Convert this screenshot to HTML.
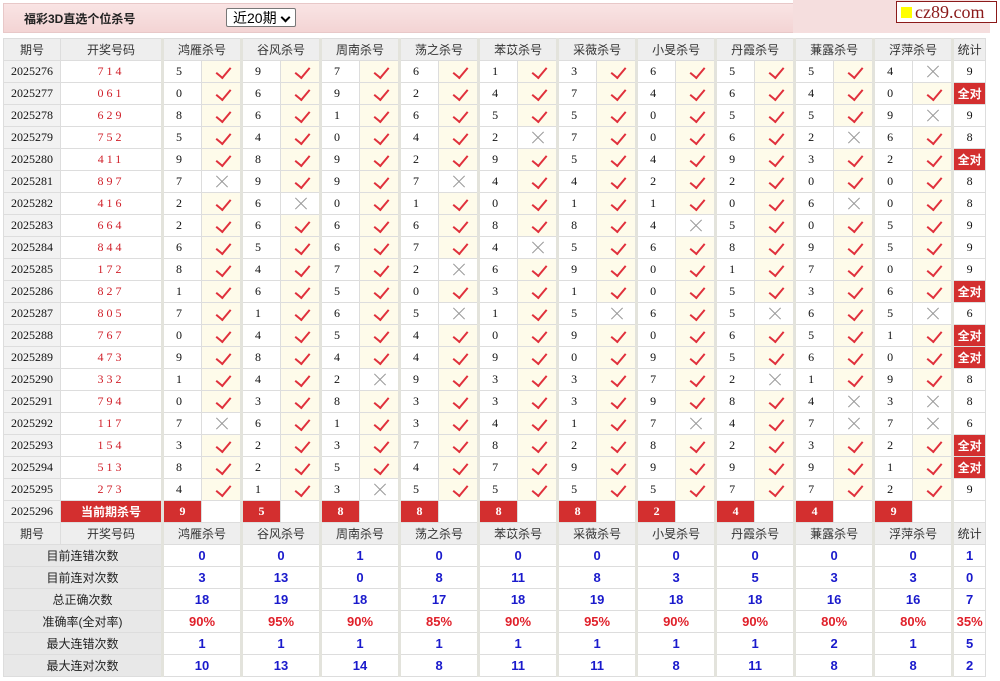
<!DOCTYPE html>
<html><head><meta charset="utf-8"><style>
body{margin:0;width:1000px;height:681px;background:#fff;font-family:"Liberation Sans","Noto Sans CJK SC",sans-serif;position:relative;overflow:hidden}
.bar{position:absolute;left:3px;top:3px;width:790px;height:28px;background:linear-gradient(#f9e4e4,#f3d4d4);border:1px solid #e8c8c8}
.bar b{position:absolute;left:20px;top:6px;font-size:12px;color:#222}
.sel{position:absolute;left:222px;top:4px;width:70px;height:19px;border:1px solid #777;border-radius:2px;background:#fff;font-size:14px;line-height:19px;padding-left:6px;box-sizing:border-box}
.sel:after{content:"";position:absolute;right:6px;top:5px;width:5px;height:5px;border-right:2px solid #000;border-bottom:2px solid #000;transform:rotate(45deg)}
.pk{position:absolute;left:793px;top:0;width:197px;height:33px;background:#f5dede}
.logo{position:absolute;left:896px;top:1px;width:99px;height:20px;border:1px solid #8b1a1a;background:#fff;font-family:"Liberation Serif",serif;font-size:18px;color:#8b1a1a;line-height:20px;white-space:nowrap;overflow:hidden}
.logo i{display:inline-block;width:11px;height:11px;background:#ff0;margin:0 3px 0 4px}
table{position:absolute;left:3px;top:38px;border-collapse:collapse;table-layout:fixed;width:982px}
td{height:21px;border:1px solid #ddd;padding:0;text-align:center;font-size:12px;font-family:"Liberation Serif","Noto Sans CJK SC",serif;color:#111;position:relative}
.h td{background:#eee;font-family:"Liberation Sans","Noto Sans CJK SC",sans-serif;color:#333}
td.p{background:#f2f2f2}
td.r{color:#d0202a;letter-spacing:3px}
td.n{border-left:3px solid #e3e3dc;text-align:left;padding-left:12px}
.h td.g{border-left:3px solid #e3e3dc}
td.c{background:#fefbea}
td.c:after{content:"";position:absolute;left:17px;top:3px;width:7px;height:12px;border-right:2px solid #e0303c;border-bottom:2px solid #e0303c;transform:rotate(40deg)}
td.x:before,td.x:after{content:"";position:absolute;left:12px;top:10px;width:16px;height:1px;background:#999;transform:rotate(45deg)}
td.x:after{transform:rotate(-45deg)}
td.q{font-family:"Liberation Sans","Noto Sans CJK SC",sans-serif;background:#d32f2f;color:#fff;font-weight:bold;font-size:12px;border-color:#fff #ddd #ddd #ddd}
td.k{background:#d32f2f;color:#fff;font-weight:bold;text-align:center;padding:0}
td.s{border-left:3px solid #e3e3dc}
.st td{font-family:"Liberation Sans",sans-serif;font-weight:bold;color:#1a1acc;font-size:13px;border-left:3px solid #e3e3dc}
.st.red td{color:#e0202a}
.st td.l{background:#e8e8e8;color:#222;font-weight:normal;font-size:12px;font-family:"Liberation Sans","Noto Sans CJK SC",sans-serif;border-left:1px solid #ddd}
</style></head><body>
<div class="bar"><b>福彩3D直选个位杀号</b><div class="sel">近20期</div></div>
<div class="pk"></div>
<div class="logo"><i></i>cz89.com</div>
<table>
<colgroup><col style="width:57px"><col style="width:102px">
<col style="width:39px"><col style="width:40px"><col style="width:39px"><col style="width:40px"><col style="width:39px"><col style="width:40px"><col style="width:39px"><col style="width:40px"><col style="width:39px"><col style="width:40px"><col style="width:39px"><col style="width:40px"><col style="width:39px"><col style="width:40px"><col style="width:39px"><col style="width:40px"><col style="width:39px"><col style="width:40px"><col style="width:39px"><col style="width:40px"><col style="width:33px"></colgroup>
<tr class="h"><td>期号</td><td>开奖号码</td><td colspan="2" class="g">鸿雁杀号</td><td colspan="2" class="g">谷风杀号</td><td colspan="2" class="g">周南杀号</td><td colspan="2" class="g">荡之杀号</td><td colspan="2" class="g">苯苡杀号</td><td colspan="2" class="g">采薇杀号</td><td colspan="2" class="g">小旻杀号</td><td colspan="2" class="g">丹霞杀号</td><td colspan="2" class="g">蒹露杀号</td><td colspan="2" class="g">浮萍杀号</td><td class="g">统计</td></tr>
<tr><td class="p">2025276</td><td class="r">714</td><td class="n">5</td><td class="c"></td><td class="n">9</td><td class="c"></td><td class="n">7</td><td class="c"></td><td class="n">6</td><td class="c"></td><td class="n">1</td><td class="c"></td><td class="n">3</td><td class="c"></td><td class="n">6</td><td class="c"></td><td class="n">5</td><td class="c"></td><td class="n">5</td><td class="c"></td><td class="n">4</td><td class="x"></td><td class="s">9</td></tr>
<tr><td class="p">2025277</td><td class="r">061</td><td class="n">0</td><td class="c"></td><td class="n">6</td><td class="c"></td><td class="n">9</td><td class="c"></td><td class="n">2</td><td class="c"></td><td class="n">4</td><td class="c"></td><td class="n">7</td><td class="c"></td><td class="n">4</td><td class="c"></td><td class="n">6</td><td class="c"></td><td class="n">4</td><td class="c"></td><td class="n">0</td><td class="c"></td><td class="s q">全对</td></tr>
<tr><td class="p">2025278</td><td class="r">629</td><td class="n">8</td><td class="c"></td><td class="n">6</td><td class="c"></td><td class="n">1</td><td class="c"></td><td class="n">6</td><td class="c"></td><td class="n">5</td><td class="c"></td><td class="n">5</td><td class="c"></td><td class="n">0</td><td class="c"></td><td class="n">5</td><td class="c"></td><td class="n">5</td><td class="c"></td><td class="n">9</td><td class="x"></td><td class="s">9</td></tr>
<tr><td class="p">2025279</td><td class="r">752</td><td class="n">5</td><td class="c"></td><td class="n">4</td><td class="c"></td><td class="n">0</td><td class="c"></td><td class="n">4</td><td class="c"></td><td class="n">2</td><td class="x"></td><td class="n">7</td><td class="c"></td><td class="n">0</td><td class="c"></td><td class="n">6</td><td class="c"></td><td class="n">2</td><td class="x"></td><td class="n">6</td><td class="c"></td><td class="s">8</td></tr>
<tr><td class="p">2025280</td><td class="r">411</td><td class="n">9</td><td class="c"></td><td class="n">8</td><td class="c"></td><td class="n">9</td><td class="c"></td><td class="n">2</td><td class="c"></td><td class="n">9</td><td class="c"></td><td class="n">5</td><td class="c"></td><td class="n">4</td><td class="c"></td><td class="n">9</td><td class="c"></td><td class="n">3</td><td class="c"></td><td class="n">2</td><td class="c"></td><td class="s q">全对</td></tr>
<tr><td class="p">2025281</td><td class="r">897</td><td class="n">7</td><td class="x"></td><td class="n">9</td><td class="c"></td><td class="n">9</td><td class="c"></td><td class="n">7</td><td class="x"></td><td class="n">4</td><td class="c"></td><td class="n">4</td><td class="c"></td><td class="n">2</td><td class="c"></td><td class="n">2</td><td class="c"></td><td class="n">0</td><td class="c"></td><td class="n">0</td><td class="c"></td><td class="s">8</td></tr>
<tr><td class="p">2025282</td><td class="r">416</td><td class="n">2</td><td class="c"></td><td class="n">6</td><td class="x"></td><td class="n">0</td><td class="c"></td><td class="n">1</td><td class="c"></td><td class="n">0</td><td class="c"></td><td class="n">1</td><td class="c"></td><td class="n">1</td><td class="c"></td><td class="n">0</td><td class="c"></td><td class="n">6</td><td class="x"></td><td class="n">0</td><td class="c"></td><td class="s">8</td></tr>
<tr><td class="p">2025283</td><td class="r">664</td><td class="n">2</td><td class="c"></td><td class="n">6</td><td class="c"></td><td class="n">6</td><td class="c"></td><td class="n">6</td><td class="c"></td><td class="n">8</td><td class="c"></td><td class="n">8</td><td class="c"></td><td class="n">4</td><td class="x"></td><td class="n">5</td><td class="c"></td><td class="n">0</td><td class="c"></td><td class="n">5</td><td class="c"></td><td class="s">9</td></tr>
<tr><td class="p">2025284</td><td class="r">844</td><td class="n">6</td><td class="c"></td><td class="n">5</td><td class="c"></td><td class="n">6</td><td class="c"></td><td class="n">7</td><td class="c"></td><td class="n">4</td><td class="x"></td><td class="n">5</td><td class="c"></td><td class="n">6</td><td class="c"></td><td class="n">8</td><td class="c"></td><td class="n">9</td><td class="c"></td><td class="n">5</td><td class="c"></td><td class="s">9</td></tr>
<tr><td class="p">2025285</td><td class="r">172</td><td class="n">8</td><td class="c"></td><td class="n">4</td><td class="c"></td><td class="n">7</td><td class="c"></td><td class="n">2</td><td class="x"></td><td class="n">6</td><td class="c"></td><td class="n">9</td><td class="c"></td><td class="n">0</td><td class="c"></td><td class="n">1</td><td class="c"></td><td class="n">7</td><td class="c"></td><td class="n">0</td><td class="c"></td><td class="s">9</td></tr>
<tr><td class="p">2025286</td><td class="r">827</td><td class="n">1</td><td class="c"></td><td class="n">6</td><td class="c"></td><td class="n">5</td><td class="c"></td><td class="n">0</td><td class="c"></td><td class="n">3</td><td class="c"></td><td class="n">1</td><td class="c"></td><td class="n">0</td><td class="c"></td><td class="n">5</td><td class="c"></td><td class="n">3</td><td class="c"></td><td class="n">6</td><td class="c"></td><td class="s q">全对</td></tr>
<tr><td class="p">2025287</td><td class="r">805</td><td class="n">7</td><td class="c"></td><td class="n">1</td><td class="c"></td><td class="n">6</td><td class="c"></td><td class="n">5</td><td class="x"></td><td class="n">1</td><td class="c"></td><td class="n">5</td><td class="x"></td><td class="n">6</td><td class="c"></td><td class="n">5</td><td class="x"></td><td class="n">6</td><td class="c"></td><td class="n">5</td><td class="x"></td><td class="s">6</td></tr>
<tr><td class="p">2025288</td><td class="r">767</td><td class="n">0</td><td class="c"></td><td class="n">4</td><td class="c"></td><td class="n">5</td><td class="c"></td><td class="n">4</td><td class="c"></td><td class="n">0</td><td class="c"></td><td class="n">9</td><td class="c"></td><td class="n">0</td><td class="c"></td><td class="n">6</td><td class="c"></td><td class="n">5</td><td class="c"></td><td class="n">1</td><td class="c"></td><td class="s q">全对</td></tr>
<tr><td class="p">2025289</td><td class="r">473</td><td class="n">9</td><td class="c"></td><td class="n">8</td><td class="c"></td><td class="n">4</td><td class="c"></td><td class="n">4</td><td class="c"></td><td class="n">9</td><td class="c"></td><td class="n">0</td><td class="c"></td><td class="n">9</td><td class="c"></td><td class="n">5</td><td class="c"></td><td class="n">6</td><td class="c"></td><td class="n">0</td><td class="c"></td><td class="s q">全对</td></tr>
<tr><td class="p">2025290</td><td class="r">332</td><td class="n">1</td><td class="c"></td><td class="n">4</td><td class="c"></td><td class="n">2</td><td class="x"></td><td class="n">9</td><td class="c"></td><td class="n">3</td><td class="c"></td><td class="n">3</td><td class="c"></td><td class="n">7</td><td class="c"></td><td class="n">2</td><td class="x"></td><td class="n">1</td><td class="c"></td><td class="n">9</td><td class="c"></td><td class="s">8</td></tr>
<tr><td class="p">2025291</td><td class="r">794</td><td class="n">0</td><td class="c"></td><td class="n">3</td><td class="c"></td><td class="n">8</td><td class="c"></td><td class="n">3</td><td class="c"></td><td class="n">3</td><td class="c"></td><td class="n">3</td><td class="c"></td><td class="n">9</td><td class="c"></td><td class="n">8</td><td class="c"></td><td class="n">4</td><td class="x"></td><td class="n">3</td><td class="x"></td><td class="s">8</td></tr>
<tr><td class="p">2025292</td><td class="r">117</td><td class="n">7</td><td class="x"></td><td class="n">6</td><td class="c"></td><td class="n">1</td><td class="c"></td><td class="n">3</td><td class="c"></td><td class="n">4</td><td class="c"></td><td class="n">1</td><td class="c"></td><td class="n">7</td><td class="x"></td><td class="n">4</td><td class="c"></td><td class="n">7</td><td class="x"></td><td class="n">7</td><td class="x"></td><td class="s">6</td></tr>
<tr><td class="p">2025293</td><td class="r">154</td><td class="n">3</td><td class="c"></td><td class="n">2</td><td class="c"></td><td class="n">3</td><td class="c"></td><td class="n">7</td><td class="c"></td><td class="n">8</td><td class="c"></td><td class="n">2</td><td class="c"></td><td class="n">8</td><td class="c"></td><td class="n">2</td><td class="c"></td><td class="n">3</td><td class="c"></td><td class="n">2</td><td class="c"></td><td class="s q">全对</td></tr>
<tr><td class="p">2025294</td><td class="r">513</td><td class="n">8</td><td class="c"></td><td class="n">2</td><td class="c"></td><td class="n">5</td><td class="c"></td><td class="n">4</td><td class="c"></td><td class="n">7</td><td class="c"></td><td class="n">9</td><td class="c"></td><td class="n">9</td><td class="c"></td><td class="n">9</td><td class="c"></td><td class="n">9</td><td class="c"></td><td class="n">1</td><td class="c"></td><td class="s q">全对</td></tr>
<tr><td class="p">2025295</td><td class="r">273</td><td class="n">4</td><td class="c"></td><td class="n">1</td><td class="c"></td><td class="n">3</td><td class="x"></td><td class="n">5</td><td class="c"></td><td class="n">5</td><td class="c"></td><td class="n">5</td><td class="c"></td><td class="n">5</td><td class="c"></td><td class="n">7</td><td class="c"></td><td class="n">7</td><td class="c"></td><td class="n">2</td><td class="c"></td><td class="s">9</td></tr>
<tr><td class="p">2025296</td><td class="q">当前期杀号</td><td class="n k">9</td><td></td><td class="n k">5</td><td></td><td class="n k">8</td><td></td><td class="n k">8</td><td></td><td class="n k">8</td><td></td><td class="n k">8</td><td></td><td class="n k">2</td><td></td><td class="n k">4</td><td></td><td class="n k">4</td><td></td><td class="n k">9</td><td></td><td class="s"></td></tr>
<tr class="h"><td>期号</td><td>开奖号码</td><td colspan="2" class="g">鸿雁杀号</td><td colspan="2" class="g">谷风杀号</td><td colspan="2" class="g">周南杀号</td><td colspan="2" class="g">荡之杀号</td><td colspan="2" class="g">苯苡杀号</td><td colspan="2" class="g">采薇杀号</td><td colspan="2" class="g">小旻杀号</td><td colspan="2" class="g">丹霞杀号</td><td colspan="2" class="g">蒹露杀号</td><td colspan="2" class="g">浮萍杀号</td><td class="g">统计</td></tr>
<tr class="st"><td colspan="2" class="l">目前连错次数</td><td colspan="2">0</td><td colspan="2">0</td><td colspan="2">1</td><td colspan="2">0</td><td colspan="2">0</td><td colspan="2">0</td><td colspan="2">0</td><td colspan="2">0</td><td colspan="2">0</td><td colspan="2">0</td><td>1</td></tr>
<tr class="st"><td colspan="2" class="l">目前连对次数</td><td colspan="2">3</td><td colspan="2">13</td><td colspan="2">0</td><td colspan="2">8</td><td colspan="2">11</td><td colspan="2">8</td><td colspan="2">3</td><td colspan="2">5</td><td colspan="2">3</td><td colspan="2">3</td><td>0</td></tr>
<tr class="st"><td colspan="2" class="l">总正确次数</td><td colspan="2">18</td><td colspan="2">19</td><td colspan="2">18</td><td colspan="2">17</td><td colspan="2">18</td><td colspan="2">19</td><td colspan="2">18</td><td colspan="2">18</td><td colspan="2">16</td><td colspan="2">16</td><td>7</td></tr>
<tr class="st red"><td colspan="2" class="l">准确率(全对率)</td><td colspan="2">90%</td><td colspan="2">95%</td><td colspan="2">90%</td><td colspan="2">85%</td><td colspan="2">90%</td><td colspan="2">95%</td><td colspan="2">90%</td><td colspan="2">90%</td><td colspan="2">80%</td><td colspan="2">80%</td><td>35%</td></tr>
<tr class="st"><td colspan="2" class="l">最大连错次数</td><td colspan="2">1</td><td colspan="2">1</td><td colspan="2">1</td><td colspan="2">1</td><td colspan="2">1</td><td colspan="2">1</td><td colspan="2">1</td><td colspan="2">1</td><td colspan="2">2</td><td colspan="2">1</td><td>5</td></tr>
<tr class="st"><td colspan="2" class="l">最大连对次数</td><td colspan="2">10</td><td colspan="2">13</td><td colspan="2">14</td><td colspan="2">8</td><td colspan="2">11</td><td colspan="2">11</td><td colspan="2">8</td><td colspan="2">11</td><td colspan="2">8</td><td colspan="2">8</td><td>2</td></tr>
</table>
</body></html>
